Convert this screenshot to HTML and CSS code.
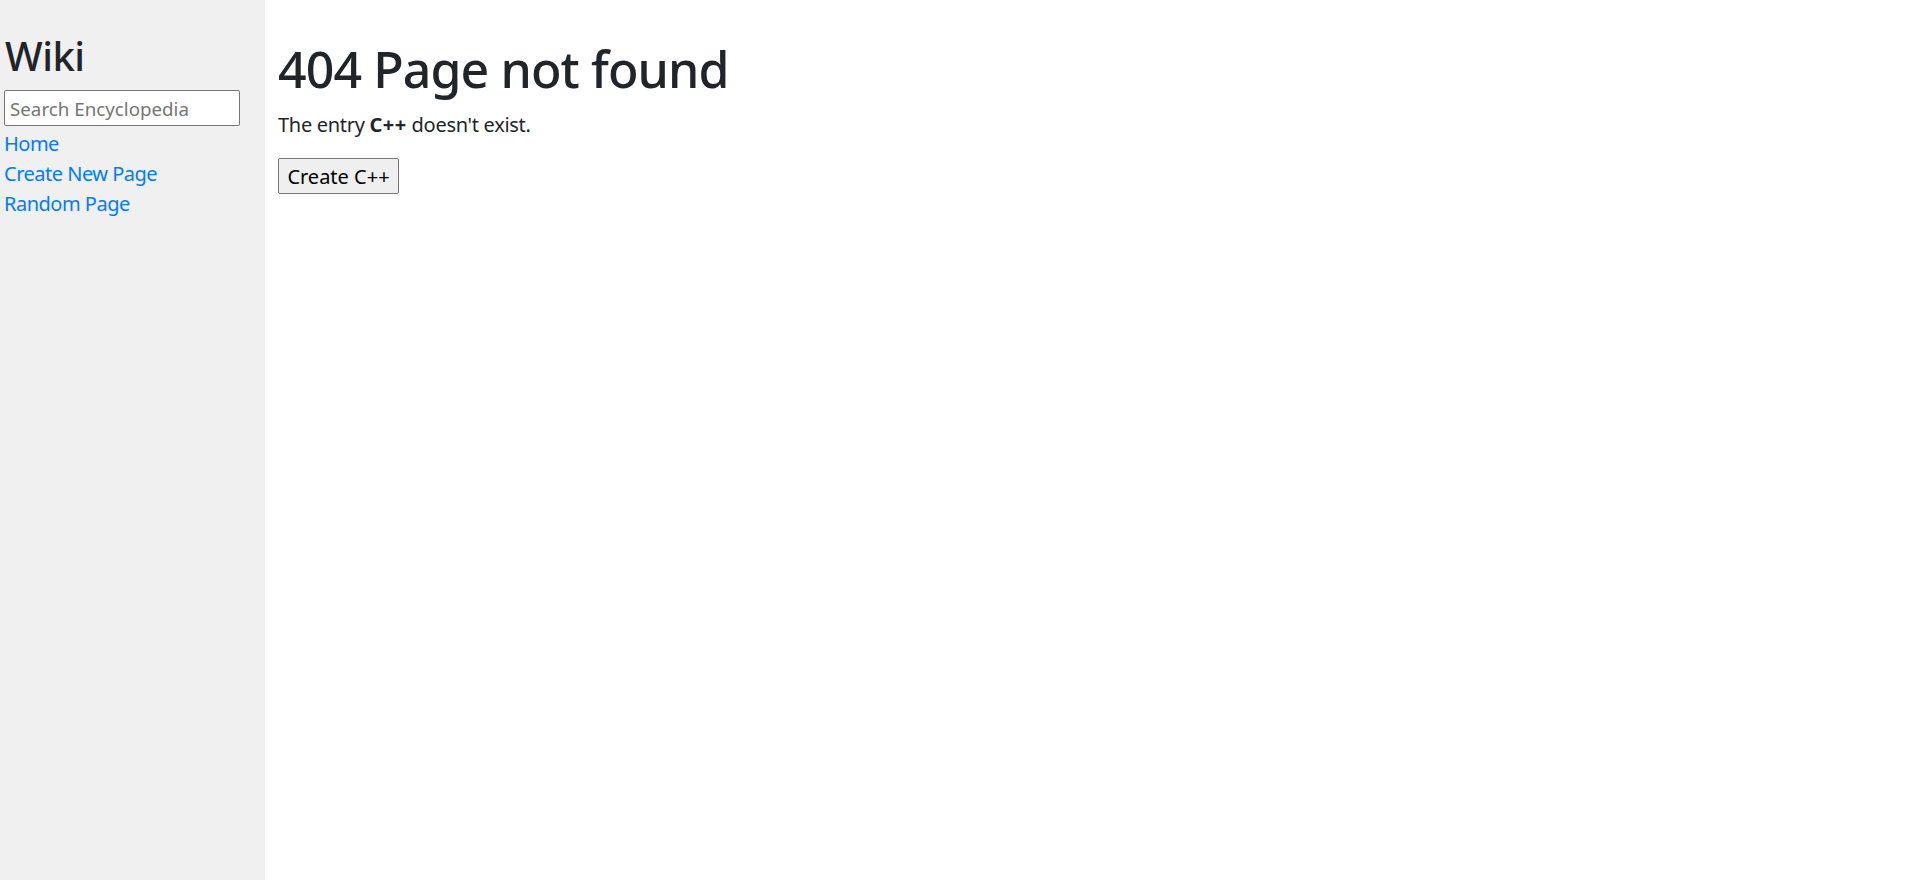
FILE: index.html
```html
<!DOCTYPE html>
<html lang="en">
<head>
<meta charset="utf-8">
<title>Page not found</title>
<link rel="stylesheet" href="styles.css">
</head>
<body>
<div class="layout">
  <nav class="sidebar">
    <h2 class="brand">Wiki</h2>
    <form class="search-form">
      <input class="search" type="text" name="q" placeholder="Search Encyclopedia">
    </form>
    <div class="nav-item"><a href="#">Home</a></div>
    <div class="nav-item"><a href="#">Create New Page</a></div>
    <div class="nav-item"><a href="#">Random Page</a></div>
  </nav>
  <main class="main">
    <h1 class="title">404 Page not found</h1>
    <p class="message">The entry <strong>C++</strong> doesn't exist.</p>
    <form class="create-form">
      <button class="create-btn" type="button">Create C++</button>
    </form>
  </main>
</div>
</body>
</html>
```
FILE: styles.css
```css
* { box-sizing: border-box; }
html, body { margin: 0; padding: 0; }
body {
  font-family: "Noto Sans", "Open Sans", sans-serif;
  font-size: 20px;
  line-height: 30px;
  color: #212529;
  background: #ffffff;
}
.layout {
  display: flex;
  height: 100vh;
}
.sidebar {
  width: 265px;
  flex: 0 0 265px;
  background: #f0f0f0;
  padding: 32px 4px 0 4px;
}
.brand {
  margin: 0 0 10px 0;
  font-size: 40px;
  line-height: 48px;
  font-weight: 500;
  padding-left: 1px;
  letter-spacing: -0.5px;
}
.search-form { margin: 0 0 3px 0; }
.search {
  display: block;
  width: 236px;
  height: 36px;
  margin: 0;
  padding: 0 5px;
  font-family: inherit;
  font-size: 18.75px;
  border: 1px solid #767676;
  border-radius: 2px;
  background: #fff;
  color: #212529;
}
.search::placeholder { color: #757575; }
.nav-item a {
  color: #007bff;
  text-decoration: none;
  letter-spacing: -0.5px;
}
.main {
  flex: 1;
  padding: 39px 12px 12px 13px;
}
.title {
  margin: 0 0 11px 0;
  font-size: 50px;
  line-height: 60px;
  font-weight: 500;
  letter-spacing: -0.9px;
}
.message {
  margin: 0 0 18px 0;
  letter-spacing: -0.3px;
}
.message strong { font-weight: 700; letter-spacing: 0.5px; }
.create-form { margin: 0; }
.create-btn {
  height: 36px;
  width: 121px;
  padding: 0 8px;
  font-family: inherit;
  font-size: 20px;
  color: #000;
  background: #efefef;
  border: 1px solid #767676;
  border-radius: 2px;
}
```
